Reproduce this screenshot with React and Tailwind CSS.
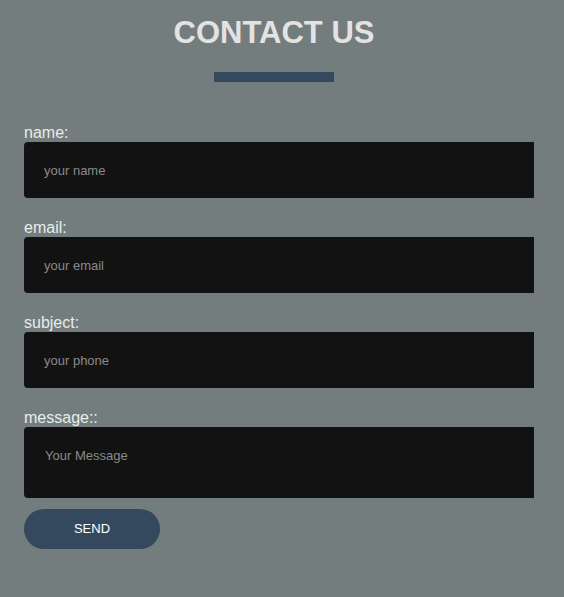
export default function App() {
  const fields = [
    { label: 'name:', placeholder: 'your name' },
    { label: 'email:', placeholder: 'your email' },
    { label: 'subject:', placeholder: 'your phone' },
  ];

  return (
    <div className="min-h-[597px] w-full bg-[#737d7d] font-['Liberation_Sans',Arial,sans-serif]">
      <div className="w-[548px] pt-[15px]">
        <h1 className="text-center text-[31px] font-bold text-[#e3e3e3] leading-[36px]">CONTACT US</h1>
        <div className="mx-auto mt-[21px] h-[10px] w-[120px] bg-[#34495e]" />
      </div>

      <form className="px-[24px] pt-[41px]" onSubmit={(e) => e.preventDefault()}>
        {fields.map((f) => (
          <div key={f.label} className="mb-[20px]">
            <label className="block text-[16px] leading-[19px] text-[#e8ecec]">{f.label}</label>
            <input
              type="text"
              placeholder={f.placeholder}
              className="block h-[56px] w-[510px] rounded-l-[4px] bg-[#121212] pl-[20px] text-[13px] text-[#cccccc] outline-none placeholder:text-[#8a8a8a]"
            />
          </div>
        ))}
        <div>
          <label className="block text-[16px] leading-[19px] text-[#e8ecec]">message::</label>
          <textarea
            placeholder="Your Message"
            className="block h-[71px] w-[510px] resize-none rounded-l-[4px] bg-[#121212] pl-[21px] pt-[21px] text-[13px] leading-[15px] text-[#cccccc] outline-none placeholder:text-[#8a8a8a]"
          />
        </div>
        <button
          type="submit"
          className="mt-[11px] h-[40px] w-[136px] rounded-full bg-[#34495e] text-[13px] text-white"
        >
          SEND
        </button>
      </form>
    </div>
  );
}
